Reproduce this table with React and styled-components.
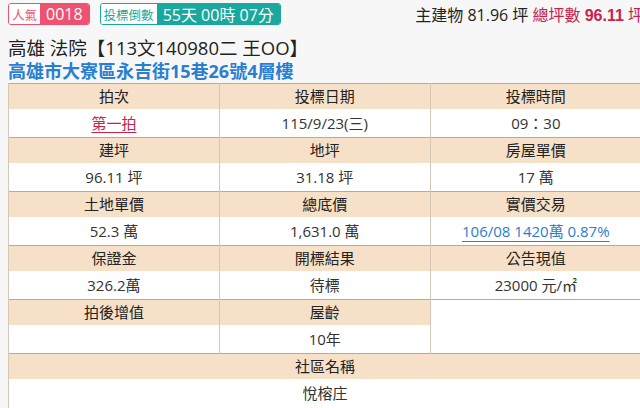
import { Fragment } from 'react';
import styled, { createGlobalStyle } from 'styled-components';

const GlobalStyle = createGlobalStyle`
  html, body {
    margin: 0;
    padding: 0;
    overflow: hidden;
    background: #f7f7f7;
  }
  body {
    font-family: "Open Sans", "Noto Sans CJK TC", sans-serif;
    color: #222;
  }
`;

const Page = styled.div`
  width: 660px;
  padding: 2px 0 0 8px;
`;

const TopBar = styled.div`
  display: flex;
  align-items: center;
  height: 24px;
  width: 636px;
`;

const Badge = styled.div`
  display: flex;
  align-items: stretch;
  height: 22px;
  border: 1px solid ${(p) => p.color};
  border-radius: 3px;
  overflow: hidden;
  margin-right: 10px;
  box-sizing: border-box;
`;

const BadgeLabel = styled.span`
  display: flex;
  align-items: center;
  padding: 0 3px;
  background: #fff;
  color: ${(p) => p.color};
  font-size: 12.5px;
`;

const BadgeValue = styled.span`
  display: flex;
  align-items: center;
  padding: 0 6px;
  background: ${(p) => p.color};
  color: #fff;
  font-size: 16px;
`;

const Area = styled.div`
  margin-left: auto;
  font-size: 16px;
  white-space: nowrap;
  color: #222;
`;

const Total = styled.span`
  color: #c8224b;
`;

const TotalNum = styled.b`
  color: #c8224b;
  font-family: "Liberation Sans", sans-serif;
`;

const Title = styled.h1`
  margin: 10px 0 0;
  font-size: 18.5px;
  font-weight: 400;
  line-height: 23px;
  color: #222;
`;

const Address = styled.h2`
  margin: 0;
  font-size: 18px;
  font-weight: 700;
  line-height: 24px;
  color: #2a7ed2;
`;

const Table = styled.table`
  width: 633px;
  border-collapse: collapse;
  table-layout: fixed;
  background: #fff;
  border-top: 1px solid #b9aa95;
  border-left: 1px solid #b9aa95;
  font-size: 15px;
`;

const HeadRow = styled.tr`
  height: 25px;
`;

const ValueRow = styled.tr`
  height: 29px;
`;

const HeadCell = styled.td`
  padding: 0;
  background: #f6e0c8;
  text-align: center;
  vertical-align: middle;
  color: #222;
  border-left: 1px solid #d6c8b6;
  border-top: ${(p) => (p.$first ? 'none' : '1px solid #b9aa95')};
  line-height: 20px;
`;

const ValueCell = styled.td`
  padding: 0;
  text-align: center;
  vertical-align: middle;
  color: #333;
  background: #fff;
  border-left: 1px solid #d6c8b6;
  line-height: 20px;
`;

const BlankCell = styled.td`
  padding: 0;
  background: #fff;
  border-left: 1px solid #d6c8b6;
  border-top: 1px solid #b9aa95;
`;

const RedLink = styled.a`
  color: #c8224b;
  text-decoration: underline;
  text-underline-offset: 3px;
`;

const BlueLink = styled.a`
  color: #2a7ed2;
  text-decoration: underline;
  text-underline-offset: 4px;
`;

const groups = [
  [
    ['拍次', <RedLink key="r">第一拍</RedLink>],
    ['投標日期', '115/9/23(三)'],
    ['投標時間', '09：30'],
  ],
  [
    ['建坪', '96.11 坪'],
    ['地坪', '31.18 坪'],
    ['房屋單價', '17 萬'],
  ],
  [
    ['土地單價', '52.3 萬'],
    ['總底價', '1,631.0 萬'],
    ['實價交易', <BlueLink key="b">106/08 1420萬 0.87%</BlueLink>],
  ],
  [
    ['保證金', '326.2萬'],
    ['開標結果', '待標'],
    ['公告現值', '23000 元/㎡'],
  ],
];

export default function App() {
  return (
    <>
      <GlobalStyle />
      <Page>
        <TopBar>
          <Badge color="#ef5170">
            <BadgeLabel color="#ef5170">人氣</BadgeLabel>
            <BadgeValue color="#ef5170">0018</BadgeValue>
          </Badge>
          <Badge color="#1aa89e">
            <BadgeLabel color="#1aa89e">投標倒數</BadgeLabel>
            <BadgeValue color="#1aa89e">55天 00時 07分</BadgeValue>
          </Badge>
          <Area>
            主建物 81.96 坪 <Total>總坪數</Total> <TotalNum>96.11</TotalNum>{' '}
            <Total>坪</Total>
          </Area>
        </TopBar>
        <Title>高雄 法院【113文140980二 王OO】</Title>
        <Address>高雄市大寮區永吉街15巷26號4層樓</Address>
        <Table>
          <tbody>
            {groups.map((g, i) => (
              <Fragment key={i}>
                <HeadRow>
                  {g.map(([label]) => (
                    <HeadCell key={label} $first={i === 0}>
                      {label}
                    </HeadCell>
                  ))}
                </HeadRow>
                <ValueRow>
                  {g.map(([label, value]) => (
                    <ValueCell key={label}>{value}</ValueCell>
                  ))}
                </ValueRow>
              </Fragment>
            ))}
            <HeadRow>
              <HeadCell>拍後增值</HeadCell>
              <HeadCell>屋齡</HeadCell>
              <BlankCell rowSpan={2} />
            </HeadRow>
            <ValueRow>
              <ValueCell />
              <ValueCell>10年</ValueCell>
            </ValueRow>
            <HeadRow>
              <HeadCell colSpan={3}>社區名稱</HeadCell>
            </HeadRow>
            <ValueRow>
              <ValueCell colSpan={3}>悅榕庄</ValueCell>
            </ValueRow>
          </tbody>
        </Table>
      </Page>
    </>
  );
}
